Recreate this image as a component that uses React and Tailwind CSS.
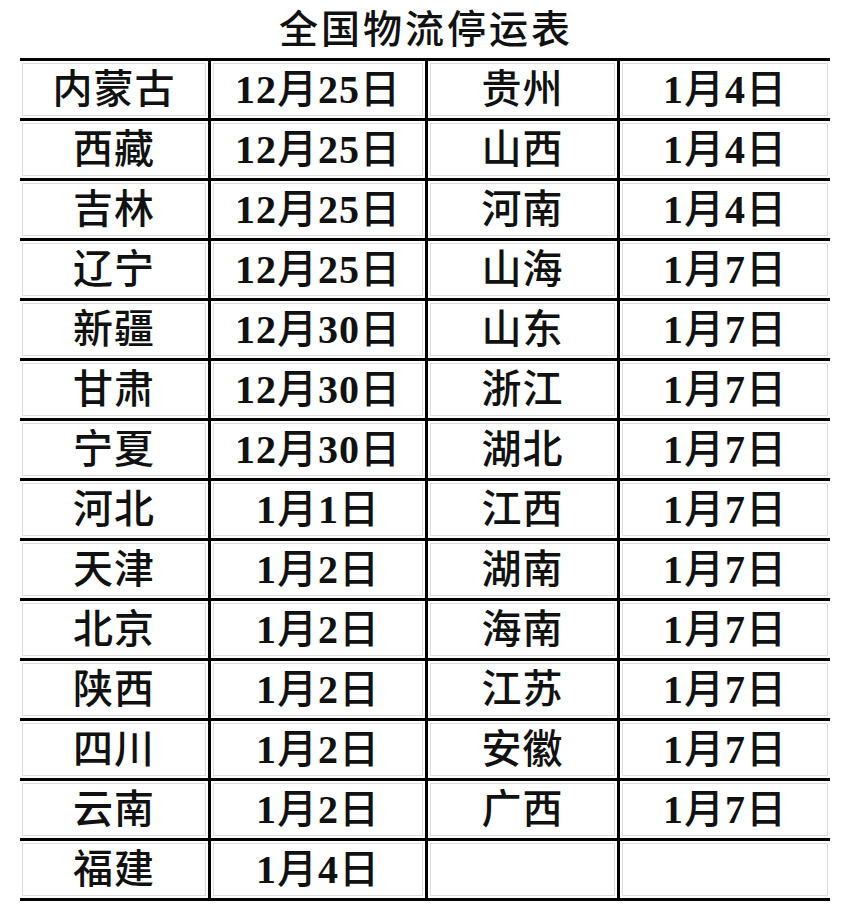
import React from "react";

const rows = [
  ["内蒙古", "12月25日", "贵州", "1月4日"],
  ["西藏", "12月25日", "山西", "1月4日"],
  ["吉林", "12月25日", "河南", "1月4日"],
  ["辽宁", "12月25日", "山海", "1月7日"],
  ["新疆", "12月30日", "山东", "1月7日"],
  ["甘肃", "12月30日", "浙江", "1月7日"],
  ["宁夏", "12月30日", "湖北", "1月7日"],
  ["河北", "1月1日", "江西", "1月7日"],
  ["天津", "1月2日", "湖南", "1月7日"],
  ["北京", "1月2日", "海南", "1月7日"],
  ["陕西", "1月2日", "江苏", "1月7日"],
  ["四川", "1月2日", "安徽", "1月7日"],
  ["云南", "1月2日", "广西", "1月7日"],
  ["福建", "1月4日", "", ""],
];

const font = { fontFamily: '"Liberation Serif", "Noto Sans CJK SC", serif' };

function Text({ text }) {
  const parts = text.match(/[0-9]+|[^0-9]+/g) || [];
  return parts.map((p, i) =>
    /[0-9]/.test(p) ? (
      <span key={i} className="font-bold">
        {p}
      </span>
    ) : (
      <span key={i} className="font-medium">
        {p}
      </span>
    )
  );
}

function Cell({ text, first }) {
  return (
    <div
      className={
        "h-[60px] border-b-[3px] border-black p-[2px] " +
        (first ? "" : "border-l-[3px]")
      }
    >
      <div className="h-full w-full border border-[#dcdcdc] flex items-center justify-center">
        <span className="text-[40px] leading-none text-[#111] tracking-[1px]">
          <Text text={text} />
        </span>
      </div>
    </div>
  );
}

export default function App() {
  return (
    <div className="w-[850px] h-[920px] bg-white" style={font}>
      <div className="h-[58px] flex items-center justify-center">
        <span className="text-[39px] leading-none font-medium text-[#111] tracking-[3px] pl-[2px]">
          全国物流停运表
        </span>
      </div>
      <div className="ml-[20px] w-[810px] border-t-[3px] border-black grid grid-cols-[188px_217px_192px_213px]">
        {rows.map((r, i) => (
          <React.Fragment key={i}>
            {r.map((t, j) => (
              <Cell key={j} text={t} first={j === 0} />
            ))}
          </React.Fragment>
        ))}
      </div>
    </div>
  );
}
